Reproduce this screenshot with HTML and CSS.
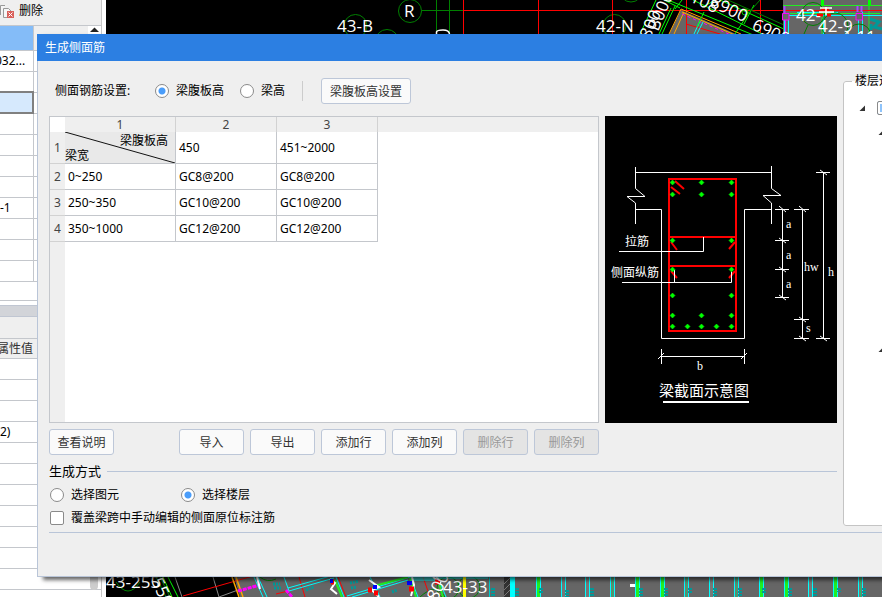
FILE: index.html
```html
<!DOCTYPE html>
<html lang="zh-CN">
<head>
<meta charset="utf-8">
<title>生成侧面筋</title>
<link rel="stylesheet" href="styles.css">
</head>
<body>
<div class="workspace">
  <aside class="side">
    <div class="side-toolbar">
      <button class="tool" type="button">
        <svg width="16" height="16" viewBox="0 0 16 16" aria-hidden="true">
          <path d="M1.500 12V2.500H6M4.500 14.500V5.500H9.500L12.500 8.500V14.500Z" fill="#f6f6f6" stroke="#999"/>
          <path d="M8 8H15V15H8Z" fill="#d9605a"/>
          <path d="M9.500 9.500L13.500 13.500M13.500 9.500L9.500 13.500" stroke="#fff"/>
        </svg>
        <span>删除</span>
      </button>
    </div>
    <div class="list-wrap">
      <table class="list">
        <thead><tr><th class="picked"></th><th></th></tr></thead>
        <tbody>
          <tr><td class="clip">032...</td><td></td></tr>
          <tr><td></td><td></td></tr>
          <tr><td class="selected"></td><td></td></tr>
          <tr><td></td><td></td></tr>
          <tr><td></td><td></td></tr>
          <tr><td></td><td></td></tr>
          <tr><td></td><td></td></tr>
          <tr><td>-1</td><td></td></tr>
          <tr><td></td><td></td></tr>
          <tr><td></td><td></td></tr>
          <tr><td></td><td></td></tr>
        </tbody>
      </table>
      <svg class="scroll-up" width="13" height="9" viewBox="0 0 13 9" aria-hidden="true"><path d="M0 0H13V9H0Z" fill="#fff"/><path d="M2 6L6.500 1.500L11 6Z" fill="#222"/></svg>
    </div>
    <div class="splitter"></div>
    <div class="props-bar"></div>
    <table class="props">
      <thead><tr><th>属性值</th></tr></thead>
      <tbody>
        <tr><td></td></tr><tr><td></td></tr><tr><td></td></tr>
        <tr><td>2)</td></tr>
        <tr><td></td></tr><tr><td></td></tr><tr><td></td></tr><tr><td></td></tr>
        <tr><td></td></tr><tr><td></td></tr><tr><td></td></tr>
      </tbody>
    </table>
    <div class="scroll-thumb"></div>
  </aside>
  <div class="drawing">
    <svg viewBox="106 0 776 597" preserveAspectRatio="xMinYMin slice" aria-hidden="true">
      <rect x="106" y="0" width="776" height="597" fill="#000"/>
      <g fill="none" stroke="#008000">
        <circle cx="410" cy="11" r="11.500"/>
        <circle cx="355.500" cy="26" r="11.500"/>
        <circle cx="387" cy="41" r="11.500"/>
        <circle cx="614.500" cy="26" r="11.500"/>
        <circle cx="631" cy="-9" r="11"/>
        <path d="M422 10.500H463M436.500 0V34M449.500 0V34"/>
      </g>
      <path d="M436.500 34V32Q437 30 443 30Q449 30 449.500 34" fill="none" stroke="#fff" stroke-width="1.500"/>
      <path d="M463.500 0V34M538.500 0V34M612.500 0V34M686.500 0V34M760.500 0V34M463 10.500H784" stroke="#f00"/>
      <path d="M681 10L736 34H669Z" fill="#666"/>
      <path d="M686.500 14V34M686 24L720 34" stroke="#f00"/>
      <g fill="none" stroke="#ffa500">
        <path d="M681 9L741 34M682 12L735 35M681 9L669 34M684 12L674 34"/>
      </g>
      <path d="M682 14L731 35" stroke="#f0f" stroke-dasharray="3 3"/>
      <path d="M700 21L694 34M703 22L697 34" stroke="#0ff"/>
      <g fill="none" stroke="#0f0">
        <path d="M656 0L640 34M671 8L659 34M675 6L662 34M664 0L680 8M668 0L790 50M693 0L762 34M720 0L797 35M704 12L697 27M748 14L735 34M754 5L744 24M675 9L682 0M702 7L714 1"/>
      </g>
      <path d="M728 0L802 33M760 0L746 16" stroke="#008000"/>
      <circle cx="745" cy="12" r="3" fill="none" stroke="#0c0"/>
      <path d="M783 0H882V34H783Z" fill="#666"/>
      <path d="M783 5.500H882M822 0V34M869 0V34M790 13.500H880" stroke="#2e2" stroke-width="1"/>
      <path d="M822.500 0V6M869.500 0V6" stroke="#0f0" stroke-width="3"/>
      <path d="M784 10.500H882" stroke="#f00"/>
      <path d="M784.500 6V34M788.500 14V34M823.500 15V34M858.500 15V34M862.500 12V34M788 15.500H882M797 12.500H838" stroke="#0ff"/>
      <path d="M784.500 6V13M857.500 6V12M861.500 6V12" stroke="#a4f" stroke-width="2"/>
      <path d="M785.500 20V34M782.500 13.500H789V20H782.500ZM856 13.500H862.500V20H856Z" fill="#666" stroke="#f0f"/>
      <g fill="none" stroke="#008000">
        <circle cx="813" cy="14" r="11.500"/><circle cx="835" cy="26" r="13"/><circle cx="859" cy="36" r="12"/><path d="M808 25L804 34"/>
      </g>
      <path d="M870 19L879 22L874 27L882 29M871 24V30" fill="none" stroke="#099" stroke-width="3"/>
      <path d="M817 15H823M821 10H829M827 15H831" stroke="#f00" stroke-width="3"/>
      <path d="M820 8H832M819 12H834M826 7V15" stroke="#fff" stroke-width="1.500"/>
      <g class="cad">
        <text x="404" y="17">R</text>
        <text x="337" y="32">43-B</text>
        <text x="596" y="32">42-N</text>
        <text x="796" y="21">42-</text>
        <text x="818" y="32">42-9</text>
        <text x="841" y="43">4-11</text>
        <text transform="translate(658 32) rotate(-67)">B000</text>
        <text transform="translate(650 40) rotate(-67)">800</text>
        <text transform="translate(689 1) rotate(25)">108</text>
        <text transform="translate(709 6) rotate(25)">8900</text>
        <text transform="translate(751 29) rotate(25)">6900</text>
      </g>
      <path d="M232 577H882V597H232Z" fill="#666"/>
      <path d="M232 577H234L240 597H232Z" fill="#000"/>
      <g fill="none" stroke="#008000">
        <path d="M116 582Q128 600 140 582M156 577L166 597M160 577L170 597M260 577Q267 583 276 579M420 597Q436 582 445 597"/>
        <circle cx="448" cy="588" r="11"/><circle cx="469" cy="587" r="11"/>
      </g>
      <path d="M163 577L172 597M168 577L178 597" stroke="#0f0"/>
      <path d="M175 577L182 597M213 577L219 597L238 590M283 577L299 577" fill="none" stroke="#888"/>
      <path d="M183 596L260 574M299 577L305 597M276 594L292 590M338 577L346 597M423 577L430 597" fill="none" stroke="#f00"/>
      <path d="M232 577L239 597M236 577L243 597" stroke="#ffa500" stroke-width="1.500"/>
      <path d="M238 591L260 585M286 590L292 597" stroke="#f0f" stroke-width="3" stroke-dasharray="4 1"/>
      <path d="M254 577L263 597M258 577L267 597M284 577L289 591L334 578M288 588L334 575M336 577L344 597M370 577L380 597M347 596L410 577L418 597M352 597L408 580M412 580H438M438 577L446 597M411 578H488" fill="none" stroke="#0ff"/>
      <path d="M335 580L342 597M374 586L408 577M410 578L416 597M438 580L443 597" stroke="#2e2" stroke-width="2"/>
      <path d="M330 579L335 583L331 589L337 594M369 580L379 587L372 590L379 597M412 577L414 585L411 596M433 577L441 583M257 577L260 589" fill="none" stroke="#fff" stroke-width="2"/>
      <path d="M331 582H334M368 590H372M409 589H414M435 582H440M374 593H378" stroke="#f00" stroke-width="5"/>
      <path d="M330 581H333M373 587H377M407 583H412" stroke="#00f" stroke-width="4"/>
      <path d="M273 584H280M274 588H281M306 590L314 587M350 583L359 581M351 588L357 587M392 592L397 590" fill="none" stroke="#099" stroke-width="3" stroke-dasharray="2 1"/>
      <path d="M464.500 577V597" stroke="#ff0" stroke-width="3"/>
      <path d="M489.500 577V597" stroke="#0cc"/>
      <path d="M504 577H511V597H504Z" fill="#333"/>
      <path d="M504 584L511 577M504 590L511 583M504 596L511 589" stroke="#777"/>
      <g transform="translate(0.500 0)">
        <path d="M512 577V597M538 577V597M563 577V597M587 577V597M612 577V597M637 577V597M662 577V597M686 577V597M711 577V597M736 577V597M761 577V597M786 577V597M810 577V597M835 577V597M860 577V597" stroke="#0ff" stroke-width="5"/>
        <path d="M538 577V597M637 577V597M662 577V597M761 577V597M786 577V597M835 577V597" stroke="#2e2" stroke-width="3"/>
        <path d="M563 577V597M587 577V597M612 577V597M686 577V597M711 577V597M736 577V597M810 577V597M860 577V597" stroke="#777" stroke-width="3"/>
        <path d="M612 577V597M686 577V597M736 577V597M860 577V597" stroke="#2b6"/>
      </g>
      <path d="M493 588V597M517 588V597M541 588V593M567 590V597M592 588V597M641 588V597M666 588V597M690 588V593M715 588V597M740 588V597M764 588V593M790 588V597M815 588V597M839 588V592M864 588V597" stroke="#099" stroke-width="4" stroke-dasharray="2 1"/>
      <path d="M630 585.500H635" stroke="#fff" stroke-width="3"/>
      <g class="cad">
        <text x="106" y="588">43-255</text>
        <text x="443" y="593">43-33</text>
        <text transform="translate(151 581) rotate(65)">550</text>
        <text transform="translate(437 602) rotate(-65)">800</text>
      </g>
    </svg>
  </div>
</div>

<section class="dialog" role="dialog" aria-labelledby="dialog-title">
  <h1 class="titlebar" id="dialog-title">生成侧面筋</h1>
  <div class="content">
    <div class="main">
      <div class="settings">
        <span class="caption">侧面钢筋设置:</span>
        <label class="choice"><input type="radio" name="basis" checked>梁腹板高</label>
        <label class="choice"><input type="radio" name="basis">梁高</label>
        <span class="divider"></span>
        <button class="btn" type="button">梁腹板高设置</button>
      </div>
      <div class="editor">
        <div class="left">
          <div class="sheet">
            <table class="rebar">
              <colgroup><col class="c-head"><col class="c-wide"><col class="c-data"><col class="c-data"></colgroup>
              <thead><tr><th class="corner"></th><th>1</th><th>2</th><th>3</th></tr></thead>
              <tbody>
                <tr class="tall"><th>1</th>
                  <td class="split">
                    <svg viewBox="0 0 110 31" preserveAspectRatio="none" aria-hidden="true"><path d="M0 0L110 31" stroke="#111"/></svg>
                    <div class="split-text"><span class="across">梁腹板高</span><span>梁宽</span></div>
                  </td><td>450</td><td>451~2000</td></tr>
                <tr><th>2</th><td>0~250</td><td>GC8@200</td><td>GC8@200</td></tr>
                <tr><th>3</th><td>250~350</td><td>GC10@200</td><td>GC10@200</td></tr>
                <tr><th>4</th><td>350~1000</td><td>GC12@200</td><td>GC12@200</td></tr>
              </tbody>
            </table>
          </div>
          <div class="actions">
            <button class="btn help" type="button">查看说明</button>
            <button class="btn" type="button">导入</button>
            <button class="btn" type="button">导出</button>
            <button class="btn" type="button">添加行</button>
            <button class="btn" type="button">添加列</button>
            <button class="btn" type="button" disabled>删除行</button>
            <button class="btn" type="button" disabled>删除列</button>
          </div>
        </div>
        <svg class="section-view" width="232" height="307" viewBox="605 116 232 307" role="img" aria-label="梁截面示意图">
          <rect x="605" y="116" width="232" height="307" fill="#000"/>
          <g fill="none" stroke="#fff">
            <path d="M635.500 172.500H771.500M635.500 167V188.500L645 196.500H627L635.500 203V224M771.500 166V188.500L781 195.500H763L771.500 203V224"/>
            <path d="M635.500 209.500H661.500V338.500H744.500V209.500H771.500"/>
          </g>
          <g fill="none" stroke="#f00" stroke-width="2">
            <path d="M669 179H736V331H669ZM669 237H736M669 266H736"/>
            <path d="M675 181L684 189M671 187L680 194M671 242L677 250M735 242L729 249M671 271L677 278M735 271L729 278"/>
          </g>
          <path d="M619 251.500H703.500V237M622 282.500H731.500V271M674.500 282V270" fill="none" stroke="#fff"/>
          <defs><path id="bar" d="M-2.500 0L0 -2.500L2.500 0L0 2.500Z" fill="#0f0" stroke="#0f0" stroke-width="0.500"/></defs>
          <use href="#bar" x="672.500" y="182.500"/><use href="#bar" x="701.500" y="182.500"/><use href="#bar" x="731.500" y="182.500"/>
          <use href="#bar" x="672.500" y="194.500"/><use href="#bar" x="701.500" y="194.500"/><use href="#bar" x="731.500" y="194.500"/>
          <use href="#bar" x="672.500" y="240.500"/><use href="#bar" x="731.500" y="240.500"/>
          <use href="#bar" x="672.500" y="269.500"/><use href="#bar" x="731.500" y="269.500"/>
          <use href="#bar" x="672.500" y="295.500"/><use href="#bar" x="731.500" y="295.500"/>
          <use href="#bar" x="672.500" y="315.500"/><use href="#bar" x="701.500" y="315.500"/><use href="#bar" x="731.500" y="315.500"/>
          <use href="#bar" x="672.500" y="326.500"/><use href="#bar" x="687.500" y="326.500"/><use href="#bar" x="701.500" y="326.500"/><use href="#bar" x="716.500" y="326.500"/><use href="#bar" x="731.500" y="326.500"/>
          <g fill="none" stroke="#fff">
            <path d="M782.500 209V298M775 209.500H789M775 240.500H789M775 269.500H789M775 297.500H789"/>
            <path d="M802.500 209V339M794 209.500H809M794 319.500H809M794 338.500H809"/>
            <path d="M823.500 172V339M816 172.500H830M816 338.500H830"/>
            <path d="M661.500 356.500H744.500M661.500 349V364M744.500 349V364"/>
            <path d="M779 206L786 212M779 238L786 243M779 267L786 272M779 295L786 300M799 206L806 212M799 317L806 322M799 336L806 341M820 170L827 175M820 336L827 341M658 359L664 353M741 359L747 353"/>
          </g>
          <g class="label">
            <text x="625" y="246">拉筋</text>
            <text x="611" y="277">侧面纵筋</text>
            <text class="heading" x="659" y="396">梁截面示意图</text>
          </g>
          <g class="dim">
            <text x="786" y="228">a</text><text x="786" y="259">a</text><text x="786" y="288">a</text>
            <text x="804" y="271">hw</text><text x="828" y="276">h</text><text x="806" y="332">s</text><text x="697" y="370">b</text>
          </g>
          <path d="M663 402H749" stroke="#fff" stroke-width="2"/>
        </svg>
      </div>
      <h2 class="group-title">生成方式</h2>
      <div class="modes">
        <label class="choice"><input type="radio" name="mode">选择图元</label>
        <label class="choice"><input type="radio" name="mode" checked>选择楼层</label>
      </div>
      <label class="choice override"><input type="checkbox">覆盖梁跨中手动编辑的侧面原位标注筋</label>
    </div>
    <fieldset class="floors">
      <legend>楼层选择</legend>
      <ul class="tree">
        <li><svg width="7" height="7" viewBox="0 0 7 7" aria-hidden="true"><path d="M0.500 6L6 0.500V6Z" fill="#333"/></svg><input type="checkbox" class="partial" aria-label="全部楼层"></li>
        <li class="child"><svg width="7" height="7" viewBox="0 0 7 7" aria-hidden="true"><path d="M0.500 6L6 0.500V6Z" fill="#333"/></svg></li>
        <li class="child later"><svg width="7" height="7" viewBox="0 0 7 7" aria-hidden="true"><path d="M0.500 6L6 0.500V6Z" fill="#333"/></svg></li>
      </ul>
    </fieldset>
  </div>
  <footer class="footer"></footer>
</section>
</body>
</html>
```
FILE: styles.css
```css
* { box-sizing: border-box; }

html, body { height: 100%; }

body {
  margin: 0;
  overflow: hidden;
  position: relative;
  background: #fff;
  color: #000;
  font: 12px/16px "Noto Sans", "Noto Sans CJK SC", sans-serif;
}

button, input { font: inherit; color: inherit; margin: 0; }

.workspace { display: flex; height: 100%; }

/* Side panel */
.side {
  position: relative;
  flex: none;
  width: 102px;
  margin-right: 4px;
  border-right: 1px solid #c6c6c6;
  overflow: hidden;
}

.side-toolbar {
  height: 26px;
  background: #efefef;
  border-bottom: 1px solid #c4c7cc;
}

.tool {
  display: flex;
  align-items: center;
  gap: 4px;
  height: 22px;
  padding: 0;
  margin-left: -1px;
  border: 0;
  background: none;
}

.list-wrap { position: relative; height: 275px; border-bottom: 1px solid #c4c7cc; }

.list, .props { border-collapse: collapse; table-layout: fixed; width: 100%; }
.list th { height: 24px; background: #efefef; border-bottom: 1px solid #c4c7cc; }
.list th:first-child { width: 33px; }
.list .picked { background: #84bcf8; }
.list td { height: 21px; padding: 0; border-bottom: 1px solid #c4c7cc; white-space: nowrap; }
.list td:first-child, .list th:first-child { border-right: 1px solid #c4c7cc; }
.list td.clip { text-indent: -5px; }
.list td.selected { background: #d6e9fd; border: 2px solid #808080; border-left: 0; }

.scroll-up { position: absolute; top: 0; right: 0; }

.splitter { height: 12px; margin-top: 4px; background: #d2d4d9; border: 1px solid #c0c6d2; border-width: 1px 0; }
.props-bar { height: 21px; background: #efefef; }
.props th { height: 20px; padding: 0; background: #efefef; border-top: 1px solid #c4c7cc; border-bottom: 1px solid #c4c7cc; text-align: left; font-weight: 400; color: #333; text-indent: -3px; }
.props td { height: 21px; padding: 0; border-bottom: 1px solid #c4c7cc; }

.scroll-thumb { position: absolute; right: 3px; bottom: 7px; width: 8px; height: 40px; border-radius: 4px; background: #cdcdcd; }

/* CAD drawing */
.drawing { flex: 1; min-width: 0; background: #000; overflow: hidden; }
.drawing svg { display: block; width: 100%; height: 100%; }
.cad { fill: #fff; font-family: "Open Sans", sans-serif; font-size: 17px; }

/* Dialog */
.dialog {
  position: absolute;
  left: 37px;
  right: 0;
  top: 34px;
  display: flex;
  flex-direction: column;
  background: #efefef;
  border: 1px solid #b9c5d8;
  border-width: 0 0 1px 1px;
  box-shadow: 6px 3px 4px rgba(0, 0, 0, 0.6);
}

.titlebar {
  margin: 0 0 0 -1px;
  padding: 0 8px;
  background: #2c7fe2;
  color: #fff;
  font-size: 12px;
  font-weight: 400;
  line-height: 27px;
}

.content { display: flex; gap: 6px; padding: 17px 0 4px 11px; }
.main { flex: 1; min-width: 0; }

.settings { display: flex; align-items: center; height: 26px; margin-bottom: 12px; padding-left: 6px; }
.caption { width: 100px; }
.choice { display: flex; align-items: center; gap: 7px; white-space: nowrap; }
.settings .choice { margin-right: 17px; }
.settings .choice + .choice { margin-left: -1px; }
.divider { width: 1px; height: 20px; margin-right: 18px; background: #ccc; }

input[type="radio"], input[type="checkbox"] {
  appearance: none;
  flex: none;
  width: 14px;
  height: 14px;
  border: 1px solid #8a8a8a;
  background: #fff;
}
input[type="radio"] { border-radius: 50%; }
input[type="radio"]:checked { background: radial-gradient(circle, #4a9dfa 0 3px, #fff 4px); }
input[type="checkbox"] { border-radius: 2px; }

.btn {
  height: 26px;
  padding: 1px 8px 0;
  border: 1px solid #bdc7d8;
  border-radius: 3px;
  background: #fafafa;
  color: #333;
  white-space: nowrap;
}
.btn:disabled { background: #e4e4e4; color: #999; }

.editor { display: flex; gap: 6px; }
.left { flex: 1; min-width: 0; display: flex; flex-direction: column; }

.section-view { flex: none; display: block; align-self: flex-start; }
.label { fill: #fff; font-family: "Noto Sans CJK SC", sans-serif; font-size: 12px; }
.label .heading { font-size: 15px; }
.dim { fill: #fff; font-family: "Liberation Serif", serif; font-size: 12px; }

.sheet {
  height: 307px;
  border: 1px solid #c4c7cc;
  background:
    linear-gradient(#efefef, #efefef) 0 0 / 100% 15px no-repeat,
    linear-gradient(#efefef, #efefef) 0 0 / 15px 100% no-repeat,
    #fff;
}

.rebar { border-collapse: separate; border-spacing: 0; table-layout: fixed; width: 328px; }
.c-head { width: 15px; }
.c-wide { width: 111px; }
.c-data { width: 101px; }
.rebar th { padding: 0; font-weight: 400; color: #444; border-bottom: 1px solid #d2d2d2; }
.rebar thead th { height: 15px; line-height: 14px; border-right: 1px solid #d2d2d2; border-bottom: 0; }
.rebar thead .corner { background: #fff; border: 0; }
.rebar td { height: 26px; padding: 0 3px; background: #fff; border: 1px solid #c4c7cc; border-width: 0 1px 1px 0; }
.rebar .tall td { height: 32px; }
.rebar td.split { position: relative; padding: 0; background: #e9e9e9; }
.split svg { position: absolute; inset: 0; width: 100%; height: 100%; }
.split-text { display: flex; flex-direction: column; line-height: 15px; }
.across { align-self: flex-end; margin-right: 7px; }

.actions { display: flex; gap: 6px; margin-top: 6px; }
.actions .btn { width: 65px; padding: 1px 0 0; }
.actions .help { margin-right: auto; }

.group-title { display: flex; align-items: center; gap: 6px; margin: 0; padding-top: 6px; font-size: 13px; font-weight: 400; line-height: 20px; }
.group-title::after { content: ""; flex: 1; height: 1px; background: #b9c5d8; }

.modes { display: grid; grid-template-columns: 131px 1fr; height: 24px; margin-top: 2px; padding-left: 1px; align-items: center; }
.override { height: 21px; padding-left: 1px; }

/* Floor picker */
.floors {
  flex: none;
  width: 50px;
  margin: -5px -11px 2px 0;
  padding: 0;
  min-width: 0;
  border: 1px solid #c4c4c4;
  border-radius: 3px;
  background: #fff;
}
.floors legend { width: 52px; margin-left: 8px; padding: 0 3px; white-space: nowrap; line-height: 16px; }
.tree { margin: 0; padding: 9px 0 0 15px; list-style: none; }
.tree li { display: flex; align-items: center; gap: 11px; height: 20px; }
.tree .child { padding-left: 19px; height: 28px; }
.tree .later { margin-top: 189px; }
input.partial { background: #8fc4fb; box-shadow: inset 0 0 0 2px #fff; }

.footer { height: 44px; margin-left: 11px; border-top: 1px solid #b9c5d8; }
```
